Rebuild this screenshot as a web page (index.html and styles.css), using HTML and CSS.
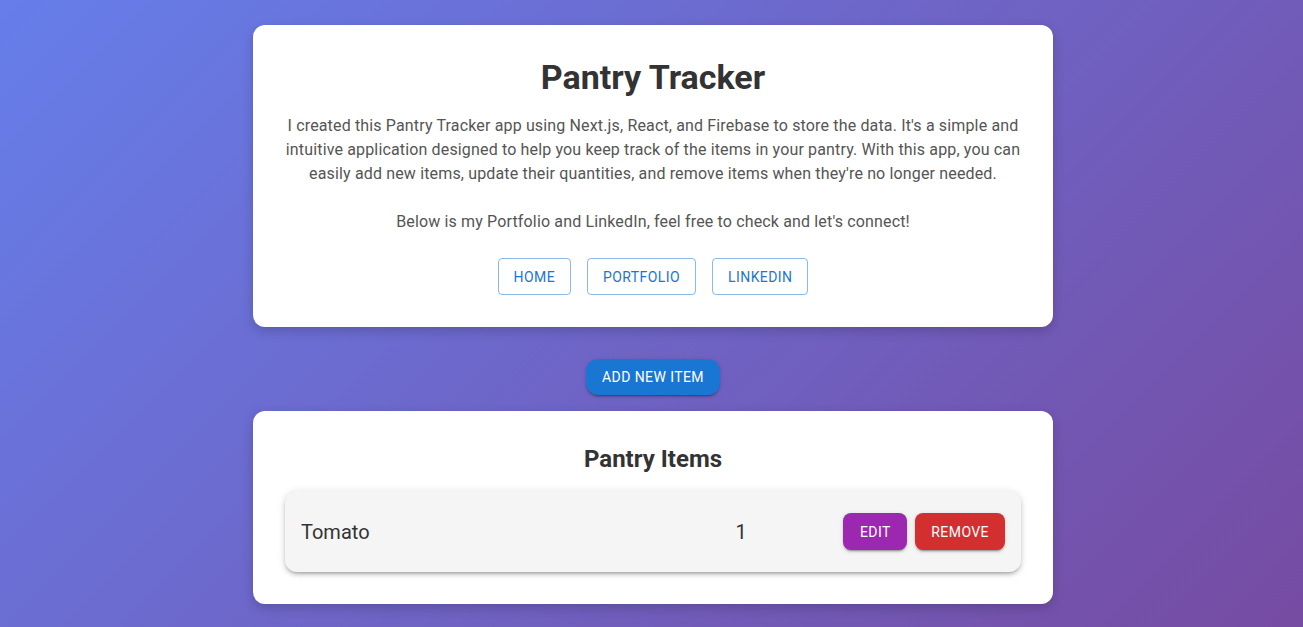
FILE: index.html
```html
<!DOCTYPE html>
<html lang="en">
<head>
<meta charset="utf-8">
<title>Pantry Tracker</title>
<link rel="stylesheet" href="styles.css">
</head>
<body>
<main class="page">
  <section class="card intro">
    <h1 class="title">Pantry Tracker</h1>
    <p class="desc">I created this Pantry Tracker app using Next.js, React, and Firebase to store the data. It's a simple and intuitive application designed to help you keep track of the items in your pantry. With this app, you can easily add new items, update their quantities, and remove items when they're no longer needed.<br><br>Below is my Portfolio and LinkedIn, feel free to check and let's connect!</p>
    <div class="links">
      <a class="btn-outline" href="#">Home</a>
      <a class="btn-outline" href="#">Portfolio</a>
      <a class="btn-outline" href="#">LinkedIn</a>
    </div>
  </section>
  <button class="btn-add">Add New Item</button>
  <section class="card items">
    <h2 class="subtitle">Pantry Items</h2>
    <div class="item">
      <span class="item-name">Tomato</span>
      <span class="item-qty">1</span>
      <div class="item-actions">
        <button class="btn btn-edit">Edit</button>
        <button class="btn btn-remove">Remove</button>
      </div>
    </div>
  </section>
</main>
</body>
</html>
```
FILE: styles.css
```css
* { box-sizing: border-box; }
html, body { margin: 0; padding: 0; }
body {
  min-height: 100vh;
  background: linear-gradient(135deg, #667eea 0%, #764ba2 100%);
  background-attachment: fixed;
  font-family: Roboto, "Liberation Sans", sans-serif;
  color: #333;
}
.page {
  display: flex;
  flex-direction: column;
  align-items: center;
  padding: 25px 0 24px 3px;
}
.card {
  width: 800px;
  background: #fff;
  border-radius: 12px;
  padding: 32px;
  box-shadow: 0 4px 12px rgba(0, 0, 0, 0.18);
  text-align: center;
}
.title {
  margin: 0 0 17px;
  font-size: 34px;
  line-height: 40px;
  font-weight: 700;
  color: #333;
}
.desc {
  margin: 0 0 24px;
  font-size: 16px;
  line-height: 24px;
  color: #555;
  letter-spacing: 0.00938em;
}
.links {
  display: flex;
  justify-content: center;
  gap: 16px;
}
.btn-outline {
  display: inline-flex;
  align-items: center;
  justify-content: center;
  height: 37px;
  padding: 0 15px;
  min-width: 64px;
  border: 1px solid rgba(25, 118, 210, 0.5);
  border-radius: 4px;
  color: #1976d2;
  font-size: 14px;
  font-weight: 400;
  letter-spacing: 0.03em;
  text-transform: uppercase;
  text-decoration: none;
}
.btn-add {
  margin: 32px 0 16px;
  height: 36px;
  padding: 0 16px;
  border: none;
  border-radius: 12px;
  background: #1976d2;
  color: #fff;
  font-family: inherit;
  font-size: 14px;
  font-weight: 400;
  letter-spacing: 0.03em;
  text-transform: uppercase;
  box-shadow: 0 3px 1px -2px rgba(0,0,0,0.2), 0 2px 2px 0 rgba(0,0,0,0.14), 0 1px 5px 0 rgba(0,0,0,0.12);
}
.subtitle {
  margin: 0 0 16px;
  font-size: 24px;
  line-height: 32px;
  font-weight: 700;
  color: #333;
}
.item {
  display: grid;
  grid-template-columns: 6fr 3fr 3fr;
  align-items: center;
  padding: 22px 16px;
  background: #f5f5f5;
  border-radius: 12px;
  box-shadow: 0 3px 3px -2px rgba(0,0,0,0.2), 0 3px 4px 0 rgba(0,0,0,0.14), 0 1px 8px 0 rgba(0,0,0,0.12);
}
.item-name {
  text-align: left;
  font-size: 20px;
  line-height: 28px;
  color: #333;
}
.item-qty {
  text-align: center;
  font-size: 20px;
  line-height: 28px;
  color: #333;
}
.item-actions {
  display: flex;
  justify-content: flex-end;
  gap: 8px;
}
.btn {
  height: 37px;
  min-width: 64px;
  padding: 0 16px;
  border: none;
  border-radius: 8px;
  color: #fff;
  font-family: inherit;
  font-size: 14px;
  font-weight: 400;
  letter-spacing: 0.03em;
  text-transform: uppercase;
  box-shadow: 0 3px 1px -2px rgba(0,0,0,0.2), 0 2px 2px 0 rgba(0,0,0,0.14), 0 1px 5px 0 rgba(0,0,0,0.12);
}
.btn-edit { background: #9c27b0; }
.btn-remove { background: #d32f2f; }
```
